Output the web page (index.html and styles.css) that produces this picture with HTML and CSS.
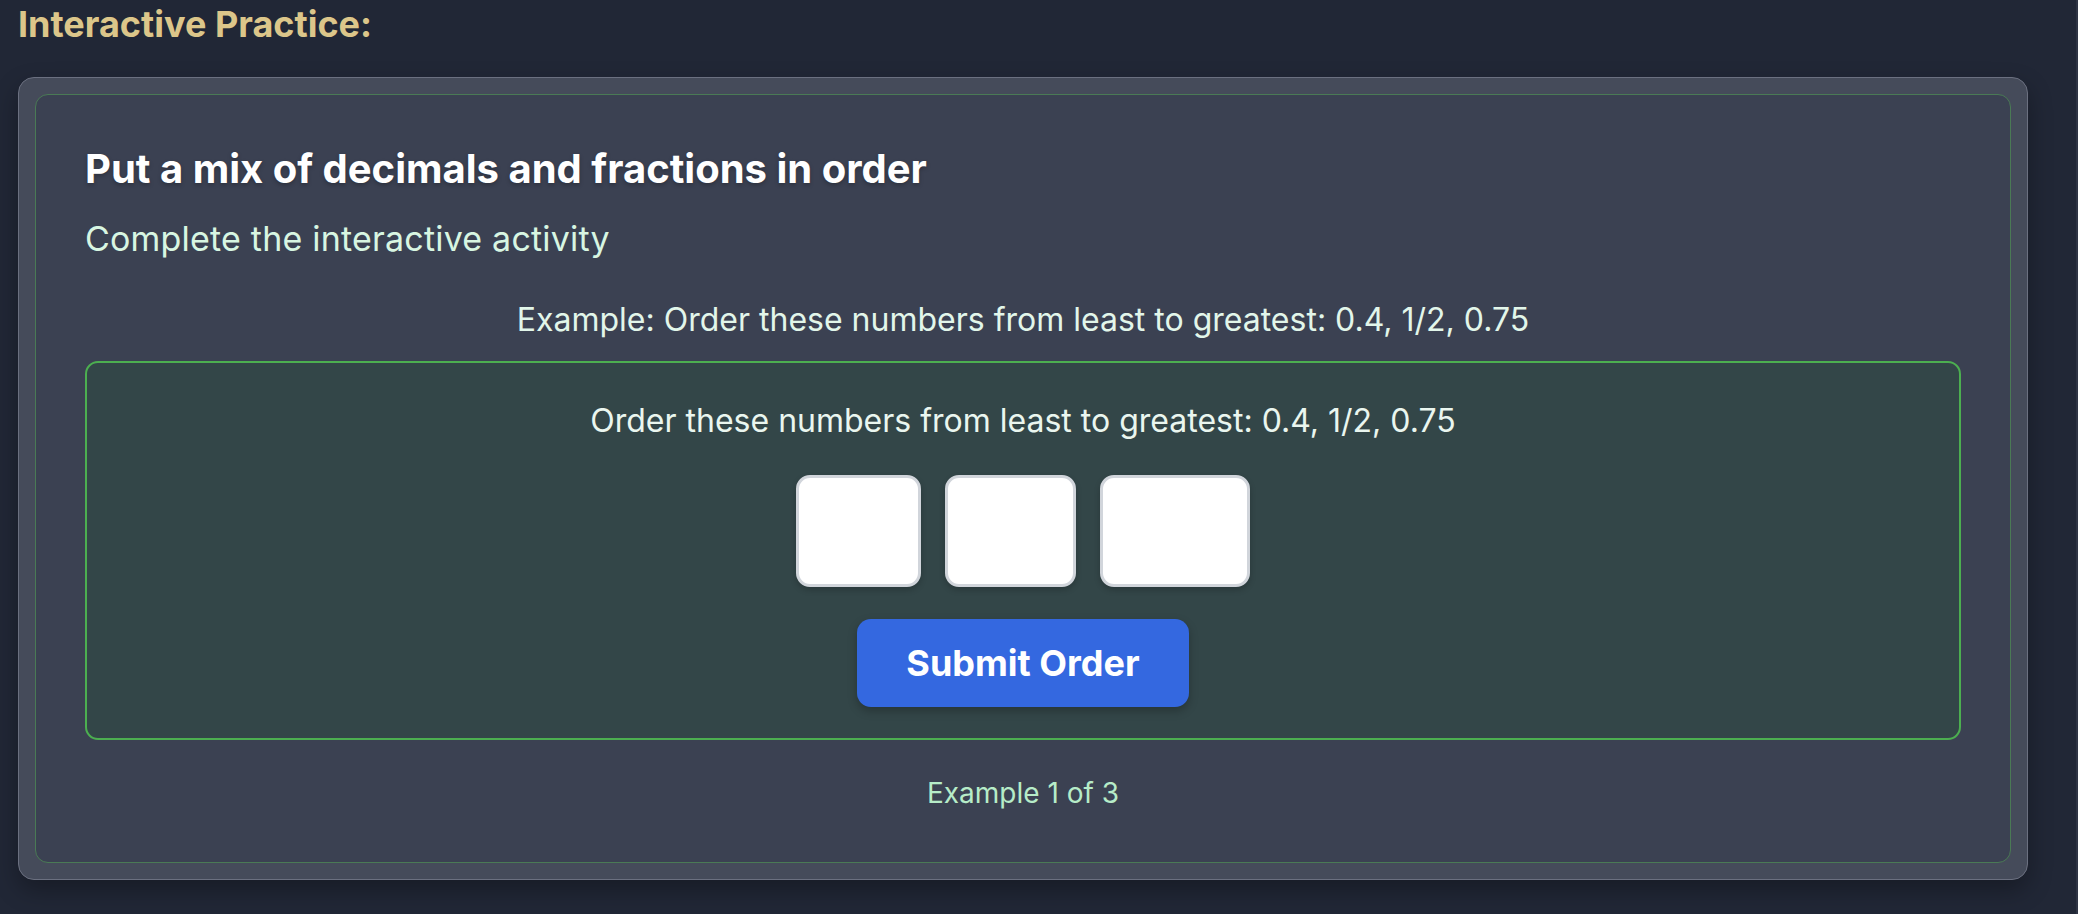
FILE: index.html
```html
<!DOCTYPE html>
<html lang="en">
<head>
<meta charset="utf-8">
<title>Interactive Practice</title>
<link rel="stylesheet" href="styles.css">
</head>
<body>
<div class="page">
  <h2 class="section-title">Interactive Practice:</h2>
  <div class="outer-card">
    <div class="inner-card">
      <h3 class="activity-title">Put a mix of decimals and fractions in order</h3>
      <p class="activity-desc">Complete the interactive activity</p>
      <p class="example-label">Example: Order these numbers from least to greatest: 0.4, 1/2, 0.75</p>
      <div class="practice-box">
        <p class="question">Order these numbers from least to greatest: 0.4, 1/2, 0.75</p>
        <div class="slots">
          <div class="slot slot-a"></div>
          <div class="slot slot-b"></div>
          <div class="slot slot-c"></div>
        </div>
        <button class="submit-btn" type="button">Submit Order</button>
      </div>
      <p class="counter">Example 1 of 3</p>
    </div>
  </div>
</div>
</body>
</html>
```

FILE: styles.css
```css
html, body {
  margin: 0;
  padding: 0;
  background: #212736;
}
body {
  font-family: Inter, "Noto Sans", "Liberation Sans", sans-serif;
  width: 2078px;
  height: 914px;
  overflow: hidden;
}
.page {
  box-sizing: border-box;
  height: 914px;
  padding: 2px 48px 0 18px;
  border-right: 2px solid #2e3444;
}
.section-title {
  margin: 0;
  font-size: 36px;
  line-height: 44px;
  font-weight: 700;
  color: #dcc68a;
}
.outer-card {
  margin-top: 31px;
  background: #454b5a;
  border: 1px solid #6b7080;
  border-radius: 16px;
  padding: 16px;
  box-shadow: 0 10px 25px rgba(0, 0, 0, 0.3);
}
.inner-card {
  background: #3b4152;
  border: 1.5px solid #4a7a55;
  border-radius: 13px;
  padding: 50px 49px 52px;
}
.activity-title {
  margin: 0;
  font-size: 40px;
  line-height: 48px;
  font-weight: 700;
  color: #ffffff;
  text-shadow: 0 2px 4px rgba(0, 0, 0, 0.25);
}
.activity-desc {
  margin: 26px 0 0;
  font-size: 34px;
  line-height: 40px;
  letter-spacing: 0.2px;
  color: #d8f6e2;
}
.example-label {
  margin: 41px 0 0;
  text-align: center;
  font-size: 32px;
  line-height: 40px;
  color: #e2f6ea;
}
.practice-box {
  margin-top: 21px;
  background: #334648;
  border: 2px solid #4caf50;
  border-radius: 13px;
  padding: 38px 20px 31px;
  display: flex;
  flex-direction: column;
  align-items: center;
}
.question {
  margin: 0;
  font-size: 32px;
  line-height: 40px;
  color: #eaf6ef;
}
.slots {
  margin-top: 34px;
  display: flex;
  gap: 24px;
}
.slot {
  box-sizing: border-box;
  height: 112px;
  background: #ffffff;
  border: 3px solid #d1d5db;
  border-radius: 14px;
  box-shadow: 0 3px 6px rgba(0, 0, 0, 0.2);
}
.slot-a { width: 125px; }
.slot-b { width: 131px; }
.slot-c { width: 150px; }
.submit-btn {
  margin-top: 32px;
  height: 88px;
  padding: 0 49px;
  background: #3468e0;
  color: #ffffff;
  border: none;
  border-radius: 14px;
  font-family: Inter, "Noto Sans", "Liberation Sans", sans-serif;
  font-size: 36px;
  font-weight: 700;
  box-shadow: 0 4px 10px rgba(0, 0, 0, 0.25);
}
.counter {
  margin: 36px 0 0;
  text-align: center;
  font-size: 28px;
  line-height: 34px;
  color: #b6ecc8;
}
```
